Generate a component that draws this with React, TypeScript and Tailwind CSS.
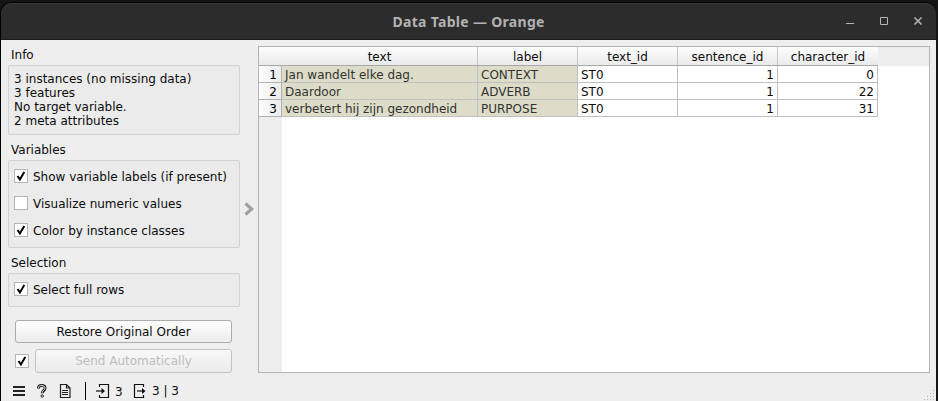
import type { ReactNode } from "react";

const rows = [
  ["Jan wandelt elke dag.", "CONTEXT", "ST0", "1", "0"],
  ["Daardoor", "ADVERB", "ST0", "1", "22"],
  ["verbetert hij zijn gezondheid", "PURPOSE", "ST0", "1", "31"],
];
const headers = ["text", "label", "text_id", "sentence_id", "character_id"];
const columns = "grid grid-cols-[23px_196px_100px_100px_100px_100px]";

function CheckBox({ checked }: { checked: boolean }) {
  return (
    <span className="block h-[14px] w-[14px] shrink-0 border border-[#b5b5b5] bg-white">
      {checked && (
        <svg width="12" height="12" viewBox="0 0 12 12" fill="none" className="block">
          <path d="M2.5 6 L4.9 9.4 L9.3 2" stroke="#000" strokeWidth="2" />
        </svg>
      )}
    </span>
  );
}

function Option({ checked, children }: { checked: boolean; children: ReactNode }) {
  return (
    <div className="flex h-[27px] items-center gap-[5px] pb-px">
      <CheckBox checked={checked} />
      <span className="pt-[2px]">{children}</span>
    </div>
  );
}

function Group({ title, className, children }: { title: string; className: string; children: ReactNode }) {
  return (
    <section>
      <h2 className="h-[18px] pl-[3px] leading-[16px]">{title}</h2>
      <div className={"w-[232px] rounded-[2px] border border-[#d2d2d2] bg-[#ebebeb] pl-[5px] " + className}>{children}</div>
    </section>
  );
}

function TitleBar() {
  return (
    <header className="grid h-[37px] shrink-0 grid-cols-[1fr_auto_1fr] items-center rounded-t-[11px] border-t border-b border-t-[#3b3b3b] border-b-[#1a1a1a] bg-[#2c2c2c]">
      <span />
      <h1 className="w-[152px] font-['Noto_Sans',sans-serif] text-[14px] leading-[19px] font-bold tracking-[0.3px] whitespace-nowrap text-[#b3b3b3]">Data Table — Orange</h1>
      <svg width="78" height="15" viewBox="0 0 78 15" className="mr-[13px] justify-self-end" fill="none" stroke="#b5b5b5">
        <path d="M1 9.5h8" />
        <path d="M35.5 3.5h7v7h-7z" />
        <path d="M69.5 3.5l7 7M76.5 3.5l-7 7" strokeWidth="1.5" />
      </svg>
    </header>
  );
}

function DataTable() {
  return (
    <main className="h-[327px] w-[672px] border border-[#b4b4b4] bg-[linear-gradient(90deg,#eeeeee_23px,#ffffff_23px)]">
      <div className="h-[19px] bg-[#eeeeee]">
        <div className={columns + " h-[19px] w-[619px] border-b border-[#a8a8a8] bg-linear-to-b from-[#fdfdfd] to-[#eaeaea] text-center leading-[21px]"}>
          <span />
          {headers.map((h, i) => (
            <span key={h} className={"h-[18px] " + (i < 4 ? "border-r border-[#c6c6c6]" : "")}>{h}</span>
          ))}
        </div>
      </div>
      {rows.map((row, r) => (
        <div key={r} className={columns + " h-[17px] w-[619px] leading-[19px]"}>
          <span className="h-[17px] border-r border-b border-[#b0b0b0] bg-linear-to-r from-[#fdfdfd] to-[#ececec] pr-[4px] text-right text-black">{r + 1}</span>
          {row.map((value, c) => (
            <span
              key={c}
              className={
                "h-[17px] border-r border-b border-[#c0c0c0] px-[3px] whitespace-nowrap " +
                (c < 2 ? "bg-[#dcdcc8] text-[#333330] " : "bg-white ") +
                (c > 2 ? "text-right" : "")
              }
            >
              {value}
            </span>
          ))}
        </div>
      ))}
    </main>
  );
}

function StatusBar() {
  return (
    <footer className="mt-[9px] flex h-[18px] items-center pl-[4px]">
      <svg width="74" height="18" viewBox="0 0 74 18" fill="none" stroke="#222">
        <path d="M1 5h12M1 9h12M1 13h12" strokeWidth="2" />
        <path d="M26.4 6.4c0-2 1.4-3 3.3-3s3.4 1 3.4 2.8c0 2.4-2.9 2.3-2.9 5" strokeWidth="2.9" />
        <path d="M26.3 5.9c.2-1.5 1.6-2.4 3.3-2.4 2 0 3.4 1 3.4 2.6 0 2.2-2.8 2.2-2.8 4.6" stroke="#eee" strokeWidth=".9" />
        <circle cx="30.2" cy="14" r="1.2" strokeWidth="1" />
        <path d="M48.5 2.5h6l3.5 3.5v9.5h-9.5zM54.5 2.5v3.5h3.5" strokeWidth="1.2" />
        <path d="M50 8.5h6M50 10.5h6M50 12.5h6" strokeWidth="1" />
        <path d="M73.5 0v18" stroke="#000" />
      </svg>
      <svg width="14" height="16" viewBox="0 0 14 16" className="ml-[10px]" fill="none" stroke="#111" strokeWidth="1.2">
        <path d="M3.5 4V1.5h9v13h-9V12" />
        <path d="M0 8h8" />
        <path d="M5.5 5L9 8l-3.5 3z" fill="#111" stroke="none" />
      </svg>
      <span className="ml-[5px] w-[18px] pt-[2px]">3</span>
      <svg width="14" height="16" viewBox="0 0 14 16" fill="none" stroke="#111" strokeWidth="1.2">
        <path d="M10.5 4V1.5h-9v13h9V12" />
        <path d="M4 8h7" />
        <path d="M9 5L12.5 8 9 11z" fill="#111" stroke="none" />
      </svg>
      <span className="ml-[5px] whitespace-nowrap">3 | 3</span>
    </footer>
  );
}

export default function App() {
  return (
    <div className="h-[401px] w-[938px] overflow-hidden bg-[#151515] pt-[2px] pr-[2px] font-['DejaVu_Sans',sans-serif] text-[12px] leading-[14px] text-[#0c0c0c]">
      <div className="flex h-[399px] flex-col rounded-t-[12px] border-t border-l border-black">
        <TitleBar />
        <div className="flex h-[361px] bg-[#eeeeee]">
          <aside className="ml-[7px] w-[232px] shrink-0 pt-[7px]">
            <Group title="Info" className="h-[70px] pt-[6px]">
              <p>3 instances (no missing data)</p>
              <p>3 features</p>
              <p>No target variable.</p>
              <p>2 meta attributes</p>
            </Group>
            <div className="h-[7px]" />
            <Group title="Variables" className="h-[88px] pt-[2px]">
              <Option checked>Show variable labels (if present)</Option>
              <Option checked={false}>Visualize numeric values</Option>
              <Option checked>Color by instance classes</Option>
            </Group>
            <div className="h-[7px]" />
            <Group title="Selection" className="h-[34px] pt-[2px]">
              <Option checked>Select full rows</Option>
            </Group>
            <button className="mt-[13px] ml-[7px] block h-[23px] w-[217px] rounded-[3px] border border-[#acacac] bg-linear-to-b from-[#fefefe] to-[#ececec]">Restore Original Order</button>
            <div className="mt-[6px] ml-[7px] flex items-center gap-[6px]">
              <CheckBox checked />
              <button disabled className="h-[24px] w-[197px] rounded-[3px] border border-[#c2c2c2] bg-linear-to-b from-[#f8f8f8] to-[#ebebeb] text-[#bebebe]">Send Automatically</button>
            </div>
            <StatusBar />
          </aside>
          <div className="flex w-[18px] shrink-0 justify-center pt-[162px]">
            <svg width="10" height="14" viewBox="0 0 10 14" fill="none">
              <path d="M1.5 1.5L7.7 7l-6.2 5.5" stroke="#a0a0a0" strokeWidth="3.2" />
            </svg>
          </div>
          <div className="pt-[6px]"><DataTable /></div>
          <svg width="10" height="10" viewBox="0 0 10 10" className="-ml-[6px] mb-[1px] self-end" fill="#b5b5b5">
            <path d="M9 0h1v1h-1zM6 3h1v1h-1zM9 3h1v1h-1zM3 6h1v1h-1zM6 6h1v1h-1zM9 6h1v1h-1zM0 9h1v1h-1zM3 9h1v1h-1zM6 9h1v1h-1zM9 9h1v1h-1z" />
          </svg>
        </div>
      </div>
    </div>
  );
}
